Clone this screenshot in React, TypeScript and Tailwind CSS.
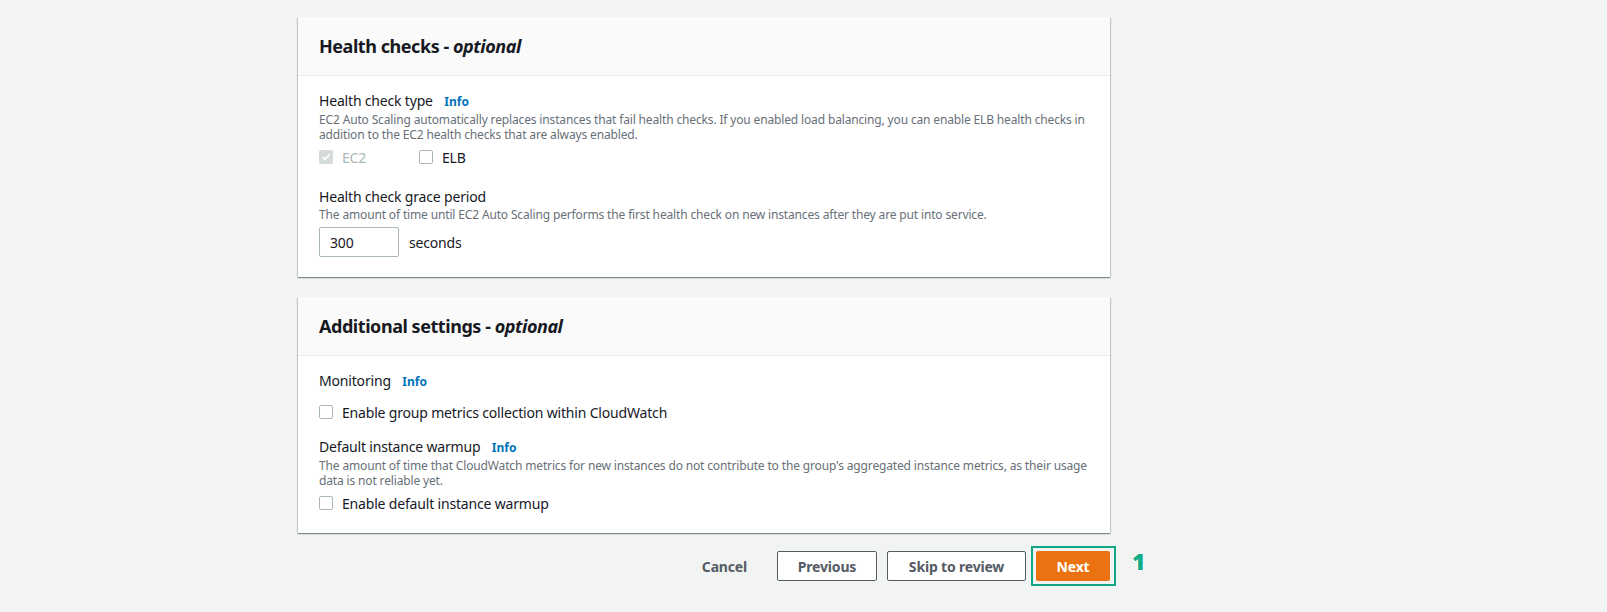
import React from "react";

function Checkbox({ checked, disabled }: { checked?: boolean; disabled?: boolean }) {
    if (checked && disabled) {
        return (
            <span className="flex h-[14px] w-[14px] shrink-0 items-center justify-center rounded-[2px] bg-[#d5dbdb]">
                <svg width="10" height="10" viewBox="0 0 10 10">
                    <path d="M1.5 5.2 L4 7.5 L8.5 2.5" fill="none" stroke="#ffffff" strokeWidth="1.8" />
                </svg>
            </span>
        );
    }
    return <span className="block h-[14px] w-[14px] shrink-0 rounded-[2px] border border-[#aab7b8] bg-white" />;
}

function Info() {
    return <span className="ml-[8px] text-[12px] font-bold tracking-normal text-[#0073bb]">Info</span>;
}

function Card({ title, children }: { title: string; children: React.ReactNode }) {
    return (
        <div className="w-[812px] bg-white shadow-[0_1px_1px_0_rgba(0,28,36,0.3),1px_1px_1px_0_rgba(0,28,36,0.15),-1px_1px_1px_0_rgba(0,28,36,0.15)]">
            <div className="flex h-[59px] items-center border-b border-[#eaeded] bg-[#fafafa] px-[21px]">
                <h2 className="text-[18px] font-bold leading-[24px] tracking-[-0.45px] text-[#16191f]">
                    {title} - <i>optional</i>
                </h2>
            </div>
            <div className="px-[21px] pb-[20px]">{children}</div>
        </div>
    );
}

export default function App() {
    return (
        <div className="min-h-[612px] bg-[#f2f3f3] pl-[298px] pt-[17px] font-['Noto_Sans',sans-serif] text-[#16191f]">
            <div className="flex w-[812px] flex-col">
                <Card title="Health checks">
                    <div className="pt-[15px]">
                        <div className="text-[14px] leading-[20px] tracking-[-0.18px]">
                            Health check type <Info />
                        </div>
                        <p className="text-[12px] leading-[15px] tracking-[-0.15px] text-[#687078]">
                            EC2 Auto Scaling automatically replaces instances that fail health checks. If you enabled load balancing, you can enable ELB health checks in addition to the EC2 health checks that are always enabled.
                        </p>
                        <div className="mt-[5px] flex h-[20px] items-center text-[14px] tracking-[-0.18px]">
                            <div className="flex w-[100px] items-center gap-[9px]">
                                <Checkbox checked disabled />
                                <span className="text-[#aab7b8]">EC2</span>
                            </div>
                            <div className="flex items-center gap-[9px]">
                                <Checkbox />
                                <span>ELB</span>
                            </div>
                        </div>
                        <div className="mt-[20px] text-[14px] leading-[20px] tracking-[-0.18px]">Health check grace period</div>
                        <p className="text-[12px] leading-[15px] tracking-[-0.15px] text-[#687078]">
                            The amount of time until EC2 Auto Scaling performs the first health check on new instances after they are put into service.
                        </p>
                        <div className="mt-[5px] flex items-center gap-[10px] text-[14px] tracking-[-0.18px]">
                            <div className="flex h-[30px] w-[80px] items-center rounded-[2px] border border-[#aab7b8] px-[10px]">300</div>
                            <span>seconds</span>
                        </div>
                    </div>
                </Card>

                <div className="mt-[20px]">
                    <Card title="Additional settings">
                        <div className="pt-[15px]">
                            <div className="text-[14px] leading-[20px] tracking-[-0.18px]">
                                Monitoring <Info />
                            </div>
                            <div className="mt-[10px] flex h-[20px] items-center gap-[9px] text-[14px] tracking-[-0.18px]">
                                <Checkbox />
                                <span>Enable group metrics collection within CloudWatch</span>
                            </div>
                            <div className="mt-[15px] text-[14px] leading-[20px] tracking-[-0.18px]">
                                Default instance warmup <Info />
                            </div>
                            <p className="text-[12px] leading-[15px] tracking-[-0.15px] text-[#687078]">
                                The amount of time that CloudWatch metrics for new instances do not contribute to the group's aggregated instance metrics, as their usage data is not reliable yet.
                            </p>
                            <div className="mt-[5px] flex h-[20px] items-center gap-[9px] text-[14px] tracking-[-0.18px]">
                                <Checkbox />
                                <span>Enable default instance warmup</span>
                            </div>
                        </div>
                    </Card>
                </div>

                <div className="mt-[18px] flex items-center justify-end gap-[10px] text-[14px] font-bold tracking-[-0.18px]">
                    <button className="h-[30px] px-[20px] text-[#545b64]">Cancel</button>
                    <button className="h-[30px] w-[100px] rounded-[2px] border border-[#545b64] bg-white text-[#545b64]">Previous</button>
                    <button className="h-[30px] w-[139px] rounded-[2px] border border-[#545b64] bg-white text-[#545b64]">Skip to review</button>
                    <div className="relative">
                        <button className="h-[30px] w-[74px] rounded-[2px] bg-[#ec7211] text-white">Next</button>
                        <div className="absolute -bottom-[5px] -left-[5px] -right-[6px] -top-[5px] border-2 border-[#12a687]" />
                        <span className="absolute left-[96px] top-[-7px] text-[23px] font-black text-[#14ab89] [text-shadow:0_0_2px_#fff,0_0_2px_#fff,0_0_2px_#fff,0_0_1px_#fff]">1</span>
                    </div>
                </div>
            </div>
        </div>
    );
}
